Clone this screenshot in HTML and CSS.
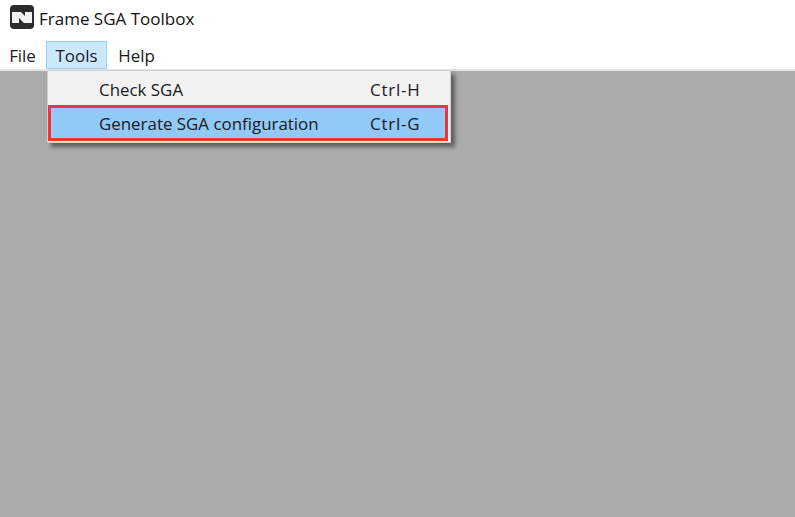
FILE: index.html
```html
<!DOCTYPE html>
<html lang="en">
<head>
  <meta charset="UTF-8">
  <title>Frame SGA Toolbox</title>
  <link rel="stylesheet" href="styles.css">
</head>
<body>
  <div class="titlebar">
    <svg class="app-icon" width="24" height="24" viewBox="0 0 24 24">
      <rect width="24" height="24" rx="4" fill="#2b2b2b"/>
      <path d="M2 7h9l4 4V7h7v11h-8l-5-5v5H2z" fill="#f2f2f2"/>
    </svg>
    <span class="app-title">Frame SGA Toolbox</span>
  </div>

  <div class="menubar">
    <div class="menubar-item item-file">File</div>
    <div class="menubar-item item-tools active">Tools</div>
    <div class="menubar-item item-help">Help</div>
  </div>

  <div class="workspace"></div>

  <div class="dropdown">
    <div class="dropdown-row">
      <span>Check SGA</span>
      <span class="shortcut">Ctrl-H</span>
    </div>
    <div class="dropdown-row selected">
      <span>Generate SGA configuration</span>
      <span class="shortcut">Ctrl-G</span>
    </div>
  </div>
</body>
</html>
```

FILE: styles.css
```css
html, body {
  height: 100%;
}
body {
  margin: 0;
  display: flex;
  flex-direction: column;
  background-color: #fff;
  color: #1a1a1a;
  font-family: "Open Sans", "Noto Sans", sans-serif;
  font-size: 16.9px;
  overflow: hidden;
}

.titlebar {
  display: flex;
  align-items: center;
  gap: 5px;
  height: 37px;
  padding-left: 10px;
  box-sizing: border-box;
}
.app-icon {
  margin-top: -3px;
}
.app-title {
  color: #111;
  font-size: 17px;
}

.menubar {
  display: flex;
  height: 34px;
  box-sizing: border-box;
  border-bottom: 2px solid #e6e6e6;
}
.menubar-item {
  display: flex;
  align-items: center;
  justify-content: center;
  height: 28px;
  margin-top: 4px;
  box-sizing: border-box;
}
.item-file {
  width: 45px;
}
.item-tools {
  width: 61px;
  margin-left: 1px;
}
.item-help {
  width: 59px;
}
.active {
  background-color: #cce8ff;
  border: 1px solid #99d1ff;
}

.workspace {
  flex: 1;
  background-color: #ababab;
}

.dropdown {
  position: absolute;
  left: 47px;
  top: 70px;
  width: 404px;
  height: 73px;
  box-sizing: border-box;
  padding: 2px 2px 1px 0;
  background-color: #f2f2f2;
  border: 1px solid #cfcfcf;
  box-shadow: 4px 4px 4px #5f5f5f;
}
.dropdown-row {
  display: flex;
  justify-content: space-between;
  align-items: center;
  height: 32px;
  padding: 0 28px 0 51px;
  box-sizing: border-box;
}
.selected {
  height: 36px;
  background-color: #91c9f7;
  outline: 3px solid #f33338;
  outline-offset: -3px;
}
.shortcut {
  width: 50px;
  letter-spacing: 0.8px;
  white-space: nowrap;
}
```
